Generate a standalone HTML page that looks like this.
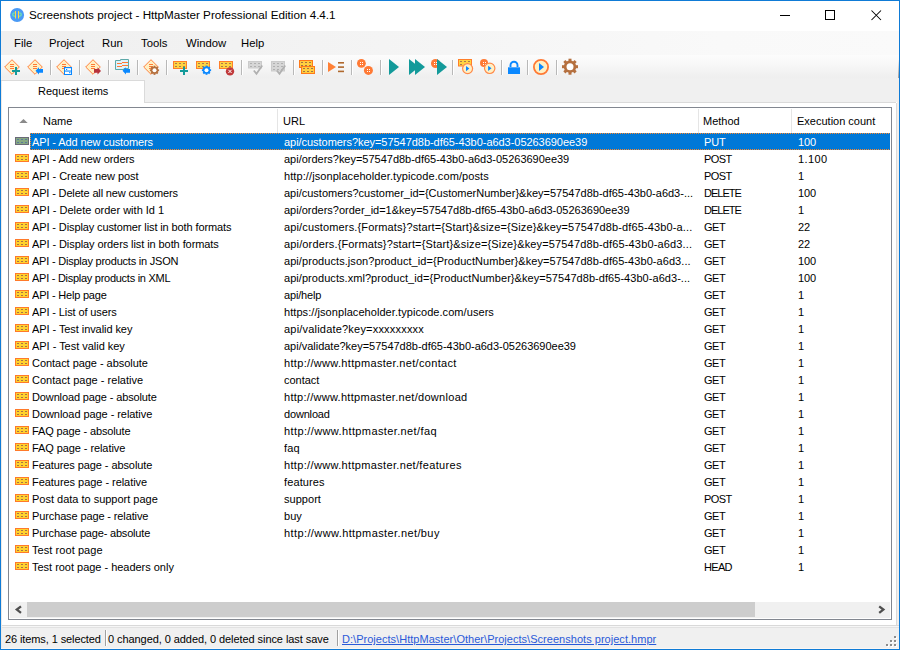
<!DOCTYPE html>
<html><head><meta charset="utf-8">
<style>
*{margin:0;padding:0;box-sizing:border-box}
html,body{width:900px;height:650px;overflow:hidden;background:#fff}
body{position:relative;font-family:"Liberation Sans",sans-serif;color:#000;font-size:11px}
.abs{position:absolute}
#frame{position:absolute;left:0;top:0;width:900px;height:650px;border:1px solid #0f7bd6;pointer-events:none;z-index:50}
#title{position:absolute;left:1px;top:1px;width:898px;height:30px;background:#fff}
#title .t{position:absolute;left:28px;top:6px;font-size:11.7px;line-height:16px;white-space:nowrap;color:#000}
#menu{position:absolute;left:1px;top:31px;width:898px;height:24px;background:linear-gradient(90deg,#efefef,#f3f3f3 35%,#f9f9f9 80%,#fafafa)}
#menu span{position:absolute;top:5px;font-size:11.3px;line-height:14px;white-space:nowrap}
#tool{position:absolute;left:1px;top:55px;width:898px;height:25px;background:linear-gradient(#fcfcfc,#f7f7f7 40%,#efefef 88%,#f0f0f0)}
#tool svg{position:absolute;top:4px;overflow:visible}
.sep{position:absolute;top:5px;width:1px;height:15px;background:#b8b8b8;box-shadow:1px 0 0 #fff}
#tabline{position:absolute;left:1px;top:80px;width:144px;height:1px;background:#dadada}
#tabbg{position:absolute;left:145px;top:80px;width:754px;height:22px;background:#f0f0f0}
#tabbot{position:absolute;left:144px;top:102px;width:752px;height:1px;background:#dadada}
#tab{position:absolute;left:1px;top:81px;width:144px;height:22px;background:#fff;border-right:1px solid #dadada}
#tab span{position:absolute;left:37px;top:3px;font-size:11px;line-height:14px;white-space:nowrap}
#panel{position:absolute;left:1px;top:103px;width:896px;height:522px;background:#fff;border-right:1px solid #dadada}
#rstrip{position:absolute;left:897px;top:81px;width:2px;height:568px;background:#f2efec}
#lstrip{position:absolute;left:1px;top:81px;width:1px;height:567px;background:#efe9e4}
#grid{position:absolute;left:8px;top:107px;width:884px;height:513px;border:1px solid #828790;background:#fff;overflow:hidden}
.hdr{position:absolute;top:6px;font-size:11px;line-height:14px;white-space:nowrap}
.hsep{position:absolute;top:1px;width:1px;height:24px;background:#e5e5e5}
.row{position:absolute;left:0;width:882px;height:17px;font-size:11px;line-height:17px;white-space:nowrap;letter-spacing:-0.1px}
.row span{position:absolute;top:1px;overflow:hidden}
.row .ri{position:absolute;left:6px;top:4px}
.c1{left:23px;width:244px}
.c2{left:275px;width:415px}
.c3{left:695px;width:90px}
.c4{left:789px;width:90px}
.sel .hl{position:absolute;left:21px;top:0;width:860px;height:17px;background:#0078d7;
  background-image:repeating-linear-gradient(90deg,#ff8828 0 1px,transparent 1px 2px),repeating-linear-gradient(90deg,#ff8828 0 1px,transparent 1px 2px),repeating-linear-gradient(0deg,#ff8828 0 1px,transparent 1px 2px);
  background-size:100% 1px,100% 1px,1px 100%;background-position:0 0,0 100%,0 0;background-repeat:no-repeat}
.sel span{color:#fff}
#hscroll{position:absolute;left:1px;top:494px;width:880px;height:16px;background:#f0f0f0}
#thumb{position:absolute;left:17px;top:0;width:728px;height:15px;background:#cdcdcd}
#status{position:absolute;left:1px;top:625px;width:898px;height:23px;background:linear-gradient(#d9d9d9 0 1px,#f6f6f6 1px 2px,#e2e2e2 2px 3px,#f0f0f0 3px)}
#sbot{position:absolute;left:1px;top:648px;width:898px;height:1px;background:#fbf7f4}
#status span{position:absolute;top:7px;font-size:11px;line-height:14px;white-space:nowrap}
.ssep{position:absolute;top:5px;width:1px;height:16px;background:#a0a0a0;box-shadow:1px 0 0 #fff}
</style></head><body>
<div id="title">
<svg class="abs" style="left:9px;top:7px" width="15" height="15" viewBox="0 0 15 15"><circle cx="7.1" cy="7" r="7" fill="#4a9af5"/><path d="M5.5 4.8 A2.8 1.8 0 0 0 5.5 8.4 M8.5 4.8 A2.8 1.8 0 0 1 8.5 8.4" stroke="#72e6a6" stroke-width="1.1" fill="none"/><path d="M5.5 3V10.5M8.5 3V10.5" stroke="#ffd84a" stroke-width="1"/></svg>
<span class="t">Screenshots project - HttpMaster Professional Edition 4.4.1</span>
<svg class="abs" style="left:779px;top:14px" width="10" height="1"><rect width="10" height="1" fill="#000"/></svg>
<svg class="abs" style="left:824px;top:9px" width="10" height="10"><rect x="0.5" y="0.5" width="9" height="9" fill="none" stroke="#000"/></svg>
<svg class="abs" style="left:870px;top:9px" width="11" height="11" viewBox="0 0 11 11"><path d="M0.5 0.5L10 10M10 0.5L0.5 10" stroke="#000" stroke-width="1.05"/></svg>
</div>
<div id="menu">
<span style="left:13px">File</span><span style="left:48px">Project</span><span style="left:101px">Run</span><span style="left:140px">Tools</span><span style="left:185px">Window</span><span style="left:240px">Help</span>
</div>
<div id="tool">
<svg style="left:3px" width="16" height="16" viewBox="0 0 16 16"><path d="M8 0.7L15.3 8L8 15.3L0.7 8Z" fill="#fff0c4" stroke="#ff7a35" stroke-width="0.95" stroke-linejoin="round"/><g fill="#ff7a35"><rect x="6" y="5" width="4" height="1"/><rect x="6" y="7" width="4" height="1"/><rect x="6" y="9" width="4" height="1"/></g><rect x="8.0" y="11.0" width="8" height="2" fill="#139a9a"/><rect x="11.0" y="8.0" width="2" height="8" fill="#139a9a"/></svg>
<svg style="left:26px" width="16" height="16" viewBox="0 0 16 16"><path d="M8 0.7L15.3 8L8 15.3L0.7 8Z" fill="#fff0c4" stroke="#ff7a35" stroke-width="0.95" stroke-linejoin="round"/><g fill="#ff7a35"><rect x="6" y="5" width="4" height="1"/><rect x="6" y="7" width="4" height="1"/><rect x="6" y="9" width="4" height="1"/></g><path d="M8.5 11.8L12 8.3V10H16V13.8H12V15.5Z" fill="#0a88ff"/></svg>
<div class="sep" style="left:49px"></div>
<svg style="left:55px" width="16" height="16" viewBox="0 0 16 16"><path d="M8 0.7L15.3 8L8 15.3L0.7 8Z" fill="#fff0c4" stroke="#ff7a35" stroke-width="0.95" stroke-linejoin="round"/><g fill="#ff7a35"><rect x="6" y="5" width="4" height="1"/><rect x="6" y="7" width="4" height="1"/><rect x="6" y="9" width="4" height="1"/></g><rect x="8" y="8" width="8" height="8" fill="#0a88ff"/><rect x="9" y="9.2" width="6" height="2.3" fill="#fff"/><rect x="9" y="12.6" width="6" height="2.4" fill="#fff"/><rect x="10" y="10" width="1.2" height="1" fill="#0a88ff"/><rect x="13" y="13.2" width="1.5" height="1" fill="#0a88ff"/></svg>
<div class="sep" style="left:78px"></div>
<svg style="left:84px" width="16" height="16" viewBox="0 0 16 16"><path d="M8 0.7L15.3 8L8 15.3L0.7 8Z" fill="#fff0c4" stroke="#ff7a35" stroke-width="0.95" stroke-linejoin="round"/><g fill="#ff7a35"><rect x="6" y="5" width="4" height="1"/><rect x="6" y="7" width="4" height="1"/><rect x="6" y="9" width="4" height="1"/></g><path d="M16 11.9L12.5 8.3V10H9V13.8H12.5V15.5Z" fill="#b8323a"/></svg>
<div class="sep" style="left:107px"></div>
<svg style="left:113px" width="16" height="16" viewBox="0 0 16 16"><path d="M1.5 1.5H6.5V0.5H14.5V9.5H10V10.5H1.5Z" fill="#dff2fb" stroke="#5ea9a9"/><g fill="#ff7a35"><rect x="3" y="4" width="5" height="1"/><rect x="8" y="3" width="6" height="1"/><rect x="3" y="7" width="5" height="1"/><rect x="8" y="6" width="6" height="1"/></g><path d="M8.5 11.8L12 8.3V10H16V13.8H12V15.5Z" fill="#0a88ff"/></svg>
<div class="sep" style="left:136px"></div>
<svg style="left:142px" width="16" height="16" viewBox="0 0 16 16"><path d="M8 0.7L15.3 8L8 15.3L0.7 8Z" fill="#fff0c4" stroke="#ff7a35" stroke-width="0.95" stroke-linejoin="round"/><g fill="#ff7a35"><rect x="6" y="5" width="4" height="1"/><rect x="6" y="7" width="4" height="1"/><rect x="6" y="9" width="4" height="1"/></g><circle cx="11.5" cy="11.3" r="3.5879999999999996" fill="#b5703f"/><rect x="10.534" y="6.700000000000001" width="1.9319999999999997" height="2.76" fill="#b5703f" transform="rotate(0.0 11.5 11.3)"/><rect x="10.534" y="6.700000000000001" width="1.9319999999999997" height="2.76" fill="#b5703f" transform="rotate(45.0 11.5 11.3)"/><rect x="10.534" y="6.700000000000001" width="1.9319999999999997" height="2.76" fill="#b5703f" transform="rotate(90.0 11.5 11.3)"/><rect x="10.534" y="6.700000000000001" width="1.9319999999999997" height="2.76" fill="#b5703f" transform="rotate(135.0 11.5 11.3)"/><rect x="10.534" y="6.700000000000001" width="1.9319999999999997" height="2.76" fill="#b5703f" transform="rotate(180.0 11.5 11.3)"/><rect x="10.534" y="6.700000000000001" width="1.9319999999999997" height="2.76" fill="#b5703f" transform="rotate(225.0 11.5 11.3)"/><rect x="10.534" y="6.700000000000001" width="1.9319999999999997" height="2.76" fill="#b5703f" transform="rotate(270.0 11.5 11.3)"/><rect x="10.534" y="6.700000000000001" width="1.9319999999999997" height="2.76" fill="#b5703f" transform="rotate(315.0 11.5 11.3)"/><circle cx="11.5" cy="11.3" r="2" fill="#fff"/></svg>
<div class="sep" style="left:165px"></div>
<svg style="left:172px" width="16" height="16" viewBox="0 0 16 16"><rect x="0.5" y="2.5" width="13" height="7" fill="#ffd341" stroke="#ff7f2a" stroke-width="1"/><rect x="2" y="4" width="2" height="1" fill="#a87850"/><rect x="6" y="4" width="2" height="1" fill="#a87850"/><rect x="10" y="4" width="2" height="1" fill="#a87850"/><rect x="2" y="7" width="2" height="1" fill="#a87850"/><rect x="6" y="7" width="2" height="1" fill="#a87850"/><rect x="10" y="7" width="2" height="1" fill="#a87850"/><rect x="7.0" y="11.0" width="8" height="2" fill="#139a9a"/><rect x="10.0" y="8.0" width="2" height="8" fill="#139a9a"/></svg>
<svg style="left:195px" width="16" height="16" viewBox="0 0 16 16"><rect x="0.5" y="2.5" width="13" height="7" fill="#ffd341" stroke="#ff7f2a" stroke-width="1"/><rect x="2" y="4" width="2" height="1" fill="#a87850"/><rect x="6" y="4" width="2" height="1" fill="#a87850"/><rect x="10" y="4" width="2" height="1" fill="#a87850"/><rect x="2" y="7" width="2" height="1" fill="#a87850"/><rect x="6" y="7" width="2" height="1" fill="#a87850"/><rect x="10" y="7" width="2" height="1" fill="#a87850"/><circle cx="10.5" cy="11.2" r="3.5879999999999996" fill="#0a88ff"/><rect x="9.534" y="6.6" width="1.9319999999999997" height="2.76" fill="#0a88ff" transform="rotate(0.0 10.5 11.2)"/><rect x="9.534" y="6.6" width="1.9319999999999997" height="2.76" fill="#0a88ff" transform="rotate(45.0 10.5 11.2)"/><rect x="9.534" y="6.6" width="1.9319999999999997" height="2.76" fill="#0a88ff" transform="rotate(90.0 10.5 11.2)"/><rect x="9.534" y="6.6" width="1.9319999999999997" height="2.76" fill="#0a88ff" transform="rotate(135.0 10.5 11.2)"/><rect x="9.534" y="6.6" width="1.9319999999999997" height="2.76" fill="#0a88ff" transform="rotate(180.0 10.5 11.2)"/><rect x="9.534" y="6.6" width="1.9319999999999997" height="2.76" fill="#0a88ff" transform="rotate(225.0 10.5 11.2)"/><rect x="9.534" y="6.6" width="1.9319999999999997" height="2.76" fill="#0a88ff" transform="rotate(270.0 10.5 11.2)"/><rect x="9.534" y="6.6" width="1.9319999999999997" height="2.76" fill="#0a88ff" transform="rotate(315.0 10.5 11.2)"/><circle cx="10.5" cy="11.2" r="2" fill="#fff"/></svg>
<svg style="left:218px" width="16" height="16" viewBox="0 0 16 16"><rect x="0.5" y="2.5" width="13" height="7" fill="#ffd341" stroke="#ff7f2a" stroke-width="1"/><rect x="2" y="4" width="2" height="1" fill="#a87850"/><rect x="6" y="4" width="2" height="1" fill="#a87850"/><rect x="10" y="4" width="2" height="1" fill="#a87850"/><rect x="2" y="7" width="2" height="1" fill="#a87850"/><rect x="6" y="7" width="2" height="1" fill="#a87850"/><rect x="10" y="7" width="2" height="1" fill="#a87850"/><circle cx="11" cy="12.4" r="4.2" fill="#c0393b"/><path d="M9.4 10.8L12.6 14M12.6 10.8L9.4 14" stroke="#fff" stroke-width="1"/></svg>
<div class="sep" style="left:240px"></div>
<svg style="left:247px" width="16" height="16" viewBox="0 0 16 16"><rect x="0.5" y="2.5" width="13" height="6.5" fill="#d6d6d6" stroke="#cbcbcb" stroke-width="1"/><rect x="2" y="4" width="2" height="1" fill="#b0b0b0"/><rect x="6" y="4" width="2" height="1" fill="#b0b0b0"/><rect x="10" y="4" width="2" height="1" fill="#b0b0b0"/><rect x="2" y="7" width="2" height="1" fill="#b0b0b0"/><rect x="6" y="7" width="2" height="1" fill="#b0b0b0"/><rect x="10" y="7" width="2" height="1" fill="#b0b0b0"/><path d="M5.8 11.5L8.5 14.8L14.2 6.5" stroke="#b0b0b0" stroke-width="1.8" fill="none"/></svg>
<svg style="left:270px" width="16" height="16" viewBox="0 0 16 16"><rect x="0.5" y="2.5" width="13" height="9.5" fill="#d6d6d6" stroke="#cbcbcb" stroke-width="1"/><rect x="2" y="4" width="2" height="1" fill="#b0b0b0"/><rect x="6" y="4" width="2" height="1" fill="#b0b0b0"/><rect x="10" y="4" width="2" height="1" fill="#b0b0b0"/><rect x="2" y="7" width="2" height="1" fill="#b0b0b0"/><rect x="6" y="7" width="2" height="1" fill="#b0b0b0"/><rect x="10" y="7" width="2" height="1" fill="#b0b0b0"/><rect x="2" y="10" width="2" height="1" fill="#b0b0b0"/><rect x="6" y="10" width="2" height="1" fill="#b0b0b0"/><rect x="10" y="10" width="2" height="1" fill="#b0b0b0"/><path d="M5.8 11.5L8.5 14.8L14.2 6.5" stroke="#b0b0b0" stroke-width="1.8" fill="none"/></svg>
<div class="sep" style="left:292px"></div>
<svg style="left:298px" width="16" height="16" viewBox="0 0 16 16"><rect x="0.525" y="1.525" width="12.95" height="6.95" fill="#ffd040" stroke="#ff7a1a" stroke-width="1.05"/><rect x="2" y="3" width="2" height="1" fill="#a0704a"/><rect x="6" y="3" width="2" height="1" fill="#a0704a"/><rect x="10" y="3" width="2" height="1" fill="#a0704a"/><rect x="2" y="6" width="2" height="1" fill="#a0704a"/><rect x="6" y="6" width="2" height="1" fill="#a0704a"/><rect x="10" y="6" width="2" height="1" fill="#a0704a"/><rect x="2.525" y="7.525" width="12.95" height="6.95" fill="#ffd040" stroke="#ff7a1a" stroke-width="1.05"/><rect x="4" y="9" width="2" height="1" fill="#a0704a"/><rect x="8" y="9" width="2" height="1" fill="#a0704a"/><rect x="12" y="9" width="2" height="1" fill="#a0704a"/><rect x="4" y="12" width="2" height="1" fill="#a0704a"/><rect x="8" y="12" width="2" height="1" fill="#a0704a"/><rect x="12" y="12" width="2" height="1" fill="#a0704a"/></svg>
<div class="sep" style="left:321px"></div>
<svg style="left:327px" width="16" height="16" viewBox="0 0 16 16"><path d="M0 3L8 8L0 13Z" fill="#ff8035"/><g fill="#b0692e"><rect x="10" y="3" width="6" height="1.6"/><rect x="10" y="7.3" width="6" height="1.6"/><rect x="10" y="11.6" width="6" height="1.6"/></g></svg>
<div class="sep" style="left:350px"></div>
<svg style="left:356px" width="16" height="16" viewBox="0 0 16 16"><circle cx="4.4" cy="4.3" r="4.4" fill="#ff7a35"/><g fill="#fff"><rect x="3" y="3" width="1" height="1"/><rect x="5" y="3" width="1" height="1"/><rect x="3" y="5" width="1" height="1"/><rect x="5" y="5" width="1" height="1"/></g><circle cx="11.4" cy="11.4" r="4.5" fill="#ff7a35"/><g fill="#fff"><rect x="10" y="10" width="1" height="1"/><rect x="12" y="10" width="1" height="1"/><rect x="10" y="12" width="1" height="1"/><rect x="12" y="12" width="1" height="1"/></g></svg>
<div class="sep" style="left:379px"></div>
<svg style="left:387px" width="16" height="16" viewBox="0 0 16 16"><path d="M1 0L11 8L1 16Z" fill="#139a9a"/></svg>
<svg style="left:408px" width="16" height="16" viewBox="0 0 16 16"><path d="M0 0L10 8L0 16Z" fill="#139a9a"/><path d="M6 0L16 8L6 16Z" fill="#139a9a"/></svg>
<svg style="left:430px" width="16" height="16" viewBox="0 0 16 16"><circle cx="4.5" cy="4.5" r="4.5" fill="#ff7a35"/><g fill="#fff"><rect x="3" y="3" width="1" height="1"/><rect x="5" y="3" width="1" height="1"/><rect x="3" y="5" width="1" height="1"/><rect x="5" y="5" width="1" height="1"/></g><path d="M6 0L16 8L6 16Z" fill="#139a9a"/></svg>
<div class="sep" style="left:451px"></div>
<svg style="left:457px" width="16" height="16" viewBox="0 0 16 16"><rect x="0.5" y="0.5" width="13" height="6.5" fill="#ffd341" stroke="#ff7f2a" stroke-width="1"/><rect x="2" y="2" width="2" height="1" fill="#a87850"/><rect x="6" y="2" width="2" height="1" fill="#a87850"/><rect x="10" y="2" width="2" height="1" fill="#a87850"/><rect x="2" y="5" width="2" height="1" fill="#a87850"/><rect x="6" y="5" width="2" height="1" fill="#a87850"/><rect x="10" y="5" width="2" height="1" fill="#a87850"/><circle cx="9.6" cy="9.6" r="5" fill="#fff0c4" stroke="#ff8a4a" stroke-width="1.2"/><path d="M8.0 7.0L11.4 9.6L8.0 12.2Z" fill="#0a88ff"/></svg>
<svg style="left:479px" width="16" height="16" viewBox="0 0 16 16"><circle cx="4" cy="4" r="4" fill="#ff7a35"/><g fill="#fff"><rect x="3" y="3" width="1" height="1"/><rect x="5" y="3" width="1" height="1"/><rect x="3" y="5" width="1" height="1"/><rect x="5" y="5" width="1" height="1"/></g><circle cx="9.7" cy="9.3" r="5.2" fill="#fff0c4" stroke="#ff8a4a" stroke-width="1.2"/><path d="M8.1 6.700000000000001L11.5 9.3L8.1 11.9Z" fill="#0a88ff"/></svg>
<div class="sep" style="left:500px"></div>
<svg style="left:507px" width="12" height="16" viewBox="0 0 12 16"><path d="M2.5 8V6.2A3.5 3.5 0 0 1 9.5 6.2V8" stroke="#0a88ff" stroke-width="1.9" fill="none"/><rect x="0" y="8.3" width="12" height="6.7" fill="#0a88ff"/></svg>
<div class="sep" style="left:526px"></div>
<svg style="left:532px" width="16" height="16" viewBox="0 0 16 16"><circle cx="8" cy="8" r="7.1" fill="#fff0c4" stroke="#ff7a35" stroke-width="1.8"/><path d="M6 4L11 8L6 12Z" fill="#0a88ff"/></svg>
<div class="sep" style="left:555px"></div>
<svg style="left:561px" width="16" height="16" viewBox="0 0 16 16"><circle cx="8" cy="7.7" r="6.24" fill="#b5703f"/><rect x="6.5" y="-0.2999999999999998" width="3.0" height="4.8" fill="#b5703f" transform="rotate(0.0 8 7.7)"/><rect x="6.5" y="-0.2999999999999998" width="3.0" height="4.8" fill="#b5703f" transform="rotate(45.0 8 7.7)"/><rect x="6.5" y="-0.2999999999999998" width="3.0" height="4.8" fill="#b5703f" transform="rotate(90.0 8 7.7)"/><rect x="6.5" y="-0.2999999999999998" width="3.0" height="4.8" fill="#b5703f" transform="rotate(135.0 8 7.7)"/><rect x="6.5" y="-0.2999999999999998" width="3.0" height="4.8" fill="#b5703f" transform="rotate(180.0 8 7.7)"/><rect x="6.5" y="-0.2999999999999998" width="3.0" height="4.8" fill="#b5703f" transform="rotate(225.0 8 7.7)"/><rect x="6.5" y="-0.2999999999999998" width="3.0" height="4.8" fill="#b5703f" transform="rotate(270.0 8 7.7)"/><rect x="6.5" y="-0.2999999999999998" width="3.0" height="4.8" fill="#b5703f" transform="rotate(315.0 8 7.7)"/><circle cx="8" cy="7.7" r="3.5" fill="#fff"/></svg>
</div>
<div id="tabline"></div>
<div id="tabbg"></div>
<div id="panel"></div>
<div id="tabbot"></div>
<div id="rstrip"></div>
<div id="tab"><span>Request items</span></div>
<div id="grid">
<svg class="abs" style="left:10px;top:11px" width="9" height="4" viewBox="0 0 9 4"><path d="M0.3 4L4.5 0.1L8.7 4Z" fill="#8a8a8a"/></svg>
<span class="hdr" style="left:34px">Name</span>
<div class="hsep" style="left:268px"></div>
<span class="hdr" style="left:274px">URL</span>
<div class="hsep" style="left:689px"></div>
<span class="hdr" style="left:694px">Method</span>
<div class="hsep" style="left:782px"></div>
<span class="hdr" style="left:788px">Execution count</span>
<div class="row sel" style="top:25px"><svg class="ri" width="14" height="8" viewBox="0 0 14 8"><rect x="0.5" y="0.5" width="13" height="7" fill="#86a882" stroke="#6a6a78"/><g fill="#5a7a9a"><rect x="2" y="2" width="2" height="1"/><rect x="6" y="2" width="2" height="1"/><rect x="10" y="2" width="2" height="1"/><rect x="2" y="5" width="2" height="1"/><rect x="6" y="5" width="2" height="1"/><rect x="10" y="5" width="2" height="1"/></g></svg><div class="hl"></div><span class="c1" style="letter-spacing:-0.109px">API - Add new customers</span><span class="c2" style="letter-spacing:-0.042px">api/customers?key=57547d8b-df65-43b0-a6d3-05263690ee39</span><span class="c3" style="letter-spacing:-0.1px">PUT</span><span class="c4" style="letter-spacing:-0.1px">100</span></div>
<div class="row" style="top:42px"><svg class="ri" width="14" height="8" viewBox="0 0 14 8"><rect x="0.5" y="0.5" width="13" height="7" fill="#ffd22e" stroke="#ff7a2a"/><g fill="#a8704a"><rect x="2" y="2" width="2" height="1"/><rect x="6" y="2" width="2" height="1"/><rect x="10" y="2" width="2" height="1"/><rect x="2" y="5" width="2" height="1"/><rect x="6" y="5" width="2" height="1"/><rect x="10" y="5" width="2" height="1"/></g></svg><div class="hl"></div><span class="c1" style="letter-spacing:-0.074px">API - Add new orders</span><span class="c2" style="letter-spacing:-0.014px">api/orders?key=57547d8b-df65-43b0-a6d3-05263690ee39</span><span class="c3" style="letter-spacing:-0.6px">POST</span><span class="c4" style="letter-spacing:0.4px">1.100</span></div>
<div class="row" style="top:59px"><svg class="ri" width="14" height="8" viewBox="0 0 14 8"><rect x="0.5" y="0.5" width="13" height="7" fill="#ffd22e" stroke="#ff7a2a"/><g fill="#a8704a"><rect x="2" y="2" width="2" height="1"/><rect x="6" y="2" width="2" height="1"/><rect x="10" y="2" width="2" height="1"/><rect x="2" y="5" width="2" height="1"/><rect x="6" y="5" width="2" height="1"/><rect x="10" y="5" width="2" height="1"/></g></svg><div class="hl"></div><span class="c1" style="letter-spacing:-0.050px">API - Create new post</span><span class="c2" style="letter-spacing:0.088px">http://jsonplaceholder.typicode.com/posts</span><span class="c3" style="letter-spacing:-0.6px">POST</span><span class="c4" style="letter-spacing:-0.1px">1</span></div>
<div class="row" style="top:76px"><svg class="ri" width="14" height="8" viewBox="0 0 14 8"><rect x="0.5" y="0.5" width="13" height="7" fill="#ffd22e" stroke="#ff7a2a"/><g fill="#a8704a"><rect x="2" y="2" width="2" height="1"/><rect x="6" y="2" width="2" height="1"/><rect x="10" y="2" width="2" height="1"/><rect x="2" y="5" width="2" height="1"/><rect x="6" y="5" width="2" height="1"/><rect x="10" y="5" width="2" height="1"/></g></svg><div class="hl"></div><span class="c1" style="letter-spacing:-0.152px">API - Delete all new customers</span><span class="c2" style="letter-spacing:0.000px">api/customers?customer_id={CustomerNumber}&amp;key=57547d8b-df65-43b0-a6d3-...</span><span class="c3" style="letter-spacing:-1.0px">DELETE</span><span class="c4" style="letter-spacing:-0.1px">100</span></div>
<div class="row" style="top:93px"><svg class="ri" width="14" height="8" viewBox="0 0 14 8"><rect x="0.5" y="0.5" width="13" height="7" fill="#ffd22e" stroke="#ff7a2a"/><g fill="#a8704a"><rect x="2" y="2" width="2" height="1"/><rect x="6" y="2" width="2" height="1"/><rect x="10" y="2" width="2" height="1"/><rect x="2" y="5" width="2" height="1"/><rect x="6" y="5" width="2" height="1"/><rect x="10" y="5" width="2" height="1"/></g></svg><div class="hl"></div><span class="c1" style="letter-spacing:0.004px">API - Delete order with Id 1</span><span class="c2" style="letter-spacing:-0.010px">api/orders?order_id=1&amp;key=57547d8b-df65-43b0-a6d3-05263690ee39</span><span class="c3" style="letter-spacing:-1.0px">DELETE</span><span class="c4" style="letter-spacing:-0.1px">1</span></div>
<div class="row" style="top:110px"><svg class="ri" width="14" height="8" viewBox="0 0 14 8"><rect x="0.5" y="0.5" width="13" height="7" fill="#ffd22e" stroke="#ff7a2a"/><g fill="#a8704a"><rect x="2" y="2" width="2" height="1"/><rect x="6" y="2" width="2" height="1"/><rect x="10" y="2" width="2" height="1"/><rect x="2" y="5" width="2" height="1"/><rect x="6" y="5" width="2" height="1"/><rect x="10" y="5" width="2" height="1"/></g></svg><div class="hl"></div><span class="c1" style="letter-spacing:-0.112px">API - Display customer list in both formats</span><span class="c2" style="letter-spacing:0.138px">api/customers.{Formats}?start={Start}&amp;size={Size}&amp;key=57547d8b-df65-43b0-a...</span><span class="c3" style="letter-spacing:-0.5px">GET</span><span class="c4" style="letter-spacing:-0.1px">22</span></div>
<div class="row" style="top:127px"><svg class="ri" width="14" height="8" viewBox="0 0 14 8"><rect x="0.5" y="0.5" width="13" height="7" fill="#ffd22e" stroke="#ff7a2a"/><g fill="#a8704a"><rect x="2" y="2" width="2" height="1"/><rect x="6" y="2" width="2" height="1"/><rect x="10" y="2" width="2" height="1"/><rect x="2" y="5" width="2" height="1"/><rect x="6" y="5" width="2" height="1"/><rect x="10" y="5" width="2" height="1"/></g></svg><div class="hl"></div><span class="c1" style="letter-spacing:-0.083px">API - Display orders list in both formats</span><span class="c2" style="letter-spacing:0.151px">api/orders.{Formats}?start={Start}&amp;size={Size}&amp;key=57547d8b-df65-43b0-a6d3...</span><span class="c3" style="letter-spacing:-0.5px">GET</span><span class="c4" style="letter-spacing:-0.1px">22</span></div>
<div class="row" style="top:144px"><svg class="ri" width="14" height="8" viewBox="0 0 14 8"><rect x="0.5" y="0.5" width="13" height="7" fill="#ffd22e" stroke="#ff7a2a"/><g fill="#a8704a"><rect x="2" y="2" width="2" height="1"/><rect x="6" y="2" width="2" height="1"/><rect x="10" y="2" width="2" height="1"/><rect x="2" y="5" width="2" height="1"/><rect x="6" y="5" width="2" height="1"/><rect x="10" y="5" width="2" height="1"/></g></svg><div class="hl"></div><span class="c1" style="letter-spacing:-0.221px">API - Display products in JSON</span><span class="c2" style="letter-spacing:0.065px">api/products.json?product_id={ProductNumber}&amp;key=57547d8b-df65-43b0-a6d3...</span><span class="c3" style="letter-spacing:-0.5px">GET</span><span class="c4" style="letter-spacing:-0.1px">100</span></div>
<div class="row" style="top:161px"><svg class="ri" width="14" height="8" viewBox="0 0 14 8"><rect x="0.5" y="0.5" width="13" height="7" fill="#ffd22e" stroke="#ff7a2a"/><g fill="#a8704a"><rect x="2" y="2" width="2" height="1"/><rect x="6" y="2" width="2" height="1"/><rect x="10" y="2" width="2" height="1"/><rect x="2" y="5" width="2" height="1"/><rect x="6" y="5" width="2" height="1"/><rect x="10" y="5" width="2" height="1"/></g></svg><div class="hl"></div><span class="c1" style="letter-spacing:-0.271px">API - Display products in XML</span><span class="c2" style="letter-spacing:0.051px">api/products.xml?product_id={ProductNumber}&amp;key=57547d8b-df65-43b0-a6d3-...</span><span class="c3" style="letter-spacing:-0.5px">GET</span><span class="c4" style="letter-spacing:-0.1px">100</span></div>
<div class="row" style="top:178px"><svg class="ri" width="14" height="8" viewBox="0 0 14 8"><rect x="0.5" y="0.5" width="13" height="7" fill="#ffd22e" stroke="#ff7a2a"/><g fill="#a8704a"><rect x="2" y="2" width="2" height="1"/><rect x="6" y="2" width="2" height="1"/><rect x="10" y="2" width="2" height="1"/><rect x="2" y="5" width="2" height="1"/><rect x="6" y="5" width="2" height="1"/><rect x="10" y="5" width="2" height="1"/></g></svg><div class="hl"></div><span class="c1" style="letter-spacing:-0.207px">API - Help page</span><span class="c2" style="letter-spacing:-0.171px">api/help</span><span class="c3" style="letter-spacing:-0.5px">GET</span><span class="c4" style="letter-spacing:-0.1px">1</span></div>
<div class="row" style="top:195px"><svg class="ri" width="14" height="8" viewBox="0 0 14 8"><rect x="0.5" y="0.5" width="13" height="7" fill="#ffd22e" stroke="#ff7a2a"/><g fill="#a8704a"><rect x="2" y="2" width="2" height="1"/><rect x="6" y="2" width="2" height="1"/><rect x="10" y="2" width="2" height="1"/><rect x="2" y="5" width="2" height="1"/><rect x="6" y="5" width="2" height="1"/><rect x="10" y="5" width="2" height="1"/></g></svg><div class="hl"></div><span class="c1" style="letter-spacing:-0.117px">API - List of users</span><span class="c2" style="letter-spacing:0.063px">https://jsonplaceholder.typicode.com/users</span><span class="c3" style="letter-spacing:-0.5px">GET</span><span class="c4" style="letter-spacing:-0.1px">1</span></div>
<div class="row" style="top:212px"><svg class="ri" width="14" height="8" viewBox="0 0 14 8"><rect x="0.5" y="0.5" width="13" height="7" fill="#ffd22e" stroke="#ff7a2a"/><g fill="#a8704a"><rect x="2" y="2" width="2" height="1"/><rect x="6" y="2" width="2" height="1"/><rect x="10" y="2" width="2" height="1"/><rect x="2" y="5" width="2" height="1"/><rect x="6" y="5" width="2" height="1"/><rect x="10" y="5" width="2" height="1"/></g></svg><div class="hl"></div><span class="c1" style="letter-spacing:-0.071px">API - Test invalid key</span><span class="c2" style="letter-spacing:0.200px">api/validate?key=xxxxxxxxx</span><span class="c3" style="letter-spacing:-0.5px">GET</span><span class="c4" style="letter-spacing:-0.1px">1</span></div>
<div class="row" style="top:229px"><svg class="ri" width="14" height="8" viewBox="0 0 14 8"><rect x="0.5" y="0.5" width="13" height="7" fill="#ffd22e" stroke="#ff7a2a"/><g fill="#a8704a"><rect x="2" y="2" width="2" height="1"/><rect x="6" y="2" width="2" height="1"/><rect x="10" y="2" width="2" height="1"/><rect x="2" y="5" width="2" height="1"/><rect x="6" y="5" width="2" height="1"/><rect x="10" y="5" width="2" height="1"/></g></svg><div class="hl"></div><span class="c1" style="letter-spacing:-0.026px">API - Test valid key</span><span class="c2" style="letter-spacing:-0.013px">api/validate?key=57547d8b-df65-43b0-a6d3-05263690ee39</span><span class="c3" style="letter-spacing:-0.5px">GET</span><span class="c4" style="letter-spacing:-0.1px">1</span></div>
<div class="row" style="top:246px"><svg class="ri" width="14" height="8" viewBox="0 0 14 8"><rect x="0.5" y="0.5" width="13" height="7" fill="#ffd22e" stroke="#ff7a2a"/><g fill="#a8704a"><rect x="2" y="2" width="2" height="1"/><rect x="6" y="2" width="2" height="1"/><rect x="10" y="2" width="2" height="1"/><rect x="2" y="5" width="2" height="1"/><rect x="6" y="5" width="2" height="1"/><rect x="10" y="5" width="2" height="1"/></g></svg><div class="hl"></div><span class="c1" style="letter-spacing:-0.041px">Contact page - absolute</span><span class="c2" style="letter-spacing:0.322px">http://www.httpmaster.net/contact</span><span class="c3" style="letter-spacing:-0.5px">GET</span><span class="c4" style="letter-spacing:-0.1px">1</span></div>
<div class="row" style="top:263px"><svg class="ri" width="14" height="8" viewBox="0 0 14 8"><rect x="0.5" y="0.5" width="13" height="7" fill="#ffd22e" stroke="#ff7a2a"/><g fill="#a8704a"><rect x="2" y="2" width="2" height="1"/><rect x="6" y="2" width="2" height="1"/><rect x="10" y="2" width="2" height="1"/><rect x="2" y="5" width="2" height="1"/><rect x="6" y="5" width="2" height="1"/><rect x="10" y="5" width="2" height="1"/></g></svg><div class="hl"></div><span class="c1" style="letter-spacing:0.023px">Contact page - relative</span><span class="c2" style="letter-spacing:-0.017px">contact</span><span class="c3" style="letter-spacing:-0.5px">GET</span><span class="c4" style="letter-spacing:-0.1px">1</span></div>
<div class="row" style="top:280px"><svg class="ri" width="14" height="8" viewBox="0 0 14 8"><rect x="0.5" y="0.5" width="13" height="7" fill="#ffd22e" stroke="#ff7a2a"/><g fill="#a8704a"><rect x="2" y="2" width="2" height="1"/><rect x="6" y="2" width="2" height="1"/><rect x="10" y="2" width="2" height="1"/><rect x="2" y="5" width="2" height="1"/><rect x="6" y="5" width="2" height="1"/><rect x="10" y="5" width="2" height="1"/></g></svg><div class="hl"></div><span class="c1" style="letter-spacing:-0.126px">Download page - absolute</span><span class="c2" style="letter-spacing:0.288px">http://www.httpmaster.net/download</span><span class="c3" style="letter-spacing:-0.5px">GET</span><span class="c4" style="letter-spacing:-0.1px">1</span></div>
<div class="row" style="top:297px"><svg class="ri" width="14" height="8" viewBox="0 0 14 8"><rect x="0.5" y="0.5" width="13" height="7" fill="#ffd22e" stroke="#ff7a2a"/><g fill="#a8704a"><rect x="2" y="2" width="2" height="1"/><rect x="6" y="2" width="2" height="1"/><rect x="10" y="2" width="2" height="1"/><rect x="2" y="5" width="2" height="1"/><rect x="6" y="5" width="2" height="1"/><rect x="10" y="5" width="2" height="1"/></g></svg><div class="hl"></div><span class="c1" style="letter-spacing:-0.061px">Download page - relative</span><span class="c2" style="letter-spacing:-0.171px">download</span><span class="c3" style="letter-spacing:-0.5px">GET</span><span class="c4" style="letter-spacing:-0.1px">1</span></div>
<div class="row" style="top:314px"><svg class="ri" width="14" height="8" viewBox="0 0 14 8"><rect x="0.5" y="0.5" width="13" height="7" fill="#ffd22e" stroke="#ff7a2a"/><g fill="#a8704a"><rect x="2" y="2" width="2" height="1"/><rect x="6" y="2" width="2" height="1"/><rect x="10" y="2" width="2" height="1"/><rect x="2" y="5" width="2" height="1"/><rect x="6" y="5" width="2" height="1"/><rect x="10" y="5" width="2" height="1"/></g></svg><div class="hl"></div><span class="c1" style="letter-spacing:-0.128px">FAQ page - absolute</span><span class="c2" style="letter-spacing:0.382px">http://www.httpmaster.net/faq</span><span class="c3" style="letter-spacing:-0.5px">GET</span><span class="c4" style="letter-spacing:-0.1px">1</span></div>
<div class="row" style="top:331px"><svg class="ri" width="14" height="8" viewBox="0 0 14 8"><rect x="0.5" y="0.5" width="13" height="7" fill="#ffd22e" stroke="#ff7a2a"/><g fill="#a8704a"><rect x="2" y="2" width="2" height="1"/><rect x="6" y="2" width="2" height="1"/><rect x="10" y="2" width="2" height="1"/><rect x="2" y="5" width="2" height="1"/><rect x="6" y="5" width="2" height="1"/><rect x="10" y="5" width="2" height="1"/></g></svg><div class="hl"></div><span class="c1" style="letter-spacing:-0.083px">FAQ page - relative</span><span class="c2" style="letter-spacing:0.150px">faq</span><span class="c3" style="letter-spacing:-0.5px">GET</span><span class="c4" style="letter-spacing:-0.1px">1</span></div>
<div class="row" style="top:348px"><svg class="ri" width="14" height="8" viewBox="0 0 14 8"><rect x="0.5" y="0.5" width="13" height="7" fill="#ffd22e" stroke="#ff7a2a"/><g fill="#a8704a"><rect x="2" y="2" width="2" height="1"/><rect x="6" y="2" width="2" height="1"/><rect x="10" y="2" width="2" height="1"/><rect x="2" y="5" width="2" height="1"/><rect x="6" y="5" width="2" height="1"/><rect x="10" y="5" width="2" height="1"/></g></svg><div class="hl"></div><span class="c1" style="letter-spacing:-0.083px">Features page - absolute</span><span class="c2" style="letter-spacing:0.339px">http://www.httpmaster.net/features</span><span class="c3" style="letter-spacing:-0.5px">GET</span><span class="c4" style="letter-spacing:-0.1px">1</span></div>
<div class="row" style="top:365px"><svg class="ri" width="14" height="8" viewBox="0 0 14 8"><rect x="0.5" y="0.5" width="13" height="7" fill="#ffd22e" stroke="#ff7a2a"/><g fill="#a8704a"><rect x="2" y="2" width="2" height="1"/><rect x="6" y="2" width="2" height="1"/><rect x="10" y="2" width="2" height="1"/><rect x="2" y="5" width="2" height="1"/><rect x="6" y="5" width="2" height="1"/><rect x="10" y="5" width="2" height="1"/></g></svg><div class="hl"></div><span class="c1" style="letter-spacing:-0.043px">Features page - relative</span><span class="c2" style="letter-spacing:0.114px">features</span><span class="c3" style="letter-spacing:-0.5px">GET</span><span class="c4" style="letter-spacing:-0.1px">1</span></div>
<div class="row" style="top:382px"><svg class="ri" width="14" height="8" viewBox="0 0 14 8"><rect x="0.5" y="0.5" width="13" height="7" fill="#ffd22e" stroke="#ff7a2a"/><g fill="#a8704a"><rect x="2" y="2" width="2" height="1"/><rect x="6" y="2" width="2" height="1"/><rect x="10" y="2" width="2" height="1"/><rect x="2" y="5" width="2" height="1"/><rect x="6" y="5" width="2" height="1"/><rect x="10" y="5" width="2" height="1"/></g></svg><div class="hl"></div><span class="c1" style="letter-spacing:-0.008px">Post data to support page</span><span class="c2" style="letter-spacing:0.033px">support</span><span class="c3" style="letter-spacing:-0.6px">POST</span><span class="c4" style="letter-spacing:-0.1px">1</span></div>
<div class="row" style="top:399px"><svg class="ri" width="14" height="8" viewBox="0 0 14 8"><rect x="0.5" y="0.5" width="13" height="7" fill="#ffd22e" stroke="#ff7a2a"/><g fill="#a8704a"><rect x="2" y="2" width="2" height="1"/><rect x="6" y="2" width="2" height="1"/><rect x="10" y="2" width="2" height="1"/><rect x="2" y="5" width="2" height="1"/><rect x="6" y="5" width="2" height="1"/><rect x="10" y="5" width="2" height="1"/></g></svg><div class="hl"></div><span class="c1" style="letter-spacing:-0.122px">Purchase page - relative</span><span class="c2" style="letter-spacing:0.050px">buy</span><span class="c3" style="letter-spacing:-0.5px">GET</span><span class="c4" style="letter-spacing:-0.1px">1</span></div>
<div class="row" style="top:416px"><svg class="ri" width="14" height="8" viewBox="0 0 14 8"><rect x="0.5" y="0.5" width="13" height="7" fill="#ffd22e" stroke="#ff7a2a"/><g fill="#a8704a"><rect x="2" y="2" width="2" height="1"/><rect x="6" y="2" width="2" height="1"/><rect x="10" y="2" width="2" height="1"/><rect x="2" y="5" width="2" height="1"/><rect x="6" y="5" width="2" height="1"/><rect x="10" y="5" width="2" height="1"/></g></svg><div class="hl"></div><span class="c1" style="letter-spacing:-0.182px">Purchase page- absolute</span><span class="c2" style="letter-spacing:0.396px">http://www.httpmaster.net/buy</span><span class="c3" style="letter-spacing:-0.5px">GET</span><span class="c4" style="letter-spacing:-0.1px">1</span></div>
<div class="row" style="top:433px"><svg class="ri" width="14" height="8" viewBox="0 0 14 8"><rect x="0.5" y="0.5" width="13" height="7" fill="#ffd22e" stroke="#ff7a2a"/><g fill="#a8704a"><rect x="2" y="2" width="2" height="1"/><rect x="6" y="2" width="2" height="1"/><rect x="10" y="2" width="2" height="1"/><rect x="2" y="5" width="2" height="1"/><rect x="6" y="5" width="2" height="1"/><rect x="10" y="5" width="2" height="1"/></g></svg><div class="hl"></div><span class="c1" style="letter-spacing:0.069px">Test root page</span><span class="c2" style="letter-spacing:-0.100px"></span><span class="c3" style="letter-spacing:-0.5px">GET</span><span class="c4" style="letter-spacing:-0.1px">1</span></div>
<div class="row" style="top:450px"><svg class="ri" width="14" height="8" viewBox="0 0 14 8"><rect x="0.5" y="0.5" width="13" height="7" fill="#ffd22e" stroke="#ff7a2a"/><g fill="#a8704a"><rect x="2" y="2" width="2" height="1"/><rect x="6" y="2" width="2" height="1"/><rect x="10" y="2" width="2" height="1"/><rect x="2" y="5" width="2" height="1"/><rect x="6" y="5" width="2" height="1"/><rect x="10" y="5" width="2" height="1"/></g></svg><div class="hl"></div><span class="c1" style="letter-spacing:-0.021px">Test root page - headers only</span><span class="c2" style="letter-spacing:-0.100px"></span><span class="c3" style="letter-spacing:-0.7px">HEAD</span><span class="c4" style="letter-spacing:-0.1px">1</span></div>
<div id="hscroll"><div id="thumb"></div>
<svg class="abs" style="left:0;top:0" width="16" height="16" viewBox="0 0 16 16"><path d="M11 4.3L6.8 7.6L11 10.9" stroke="#4f4f4f" stroke-width="2.3" fill="none"/></svg>
<svg class="abs" style="left:864px;top:0" width="16" height="16" viewBox="0 0 16 16"><path d="M5.2 4.3L9.4 7.6L5.2 10.9" stroke="#4f4f4f" stroke-width="2.3" fill="none"/></svg>
</div>
</div>
<div id="status">
<span style="left:4px;letter-spacing:-0.1px">26 items, 1 selected</span>
<div class="ssep" style="left:104px"></div>
<span style="left:107px;letter-spacing:-0.07px">0 changed, 0 added, 0 deleted since last save</span>
<div class="ssep" style="left:336px"></div>
<span style="left:341px;color:#2a5ad8;text-decoration:underline;letter-spacing:0.03px">D:\Projects\HttpMaster\Other\Projects\Screenshots project.hmpr</span>
<svg class="abs" style="left:884px;top:10px" width="13" height="13" viewBox="0 0 13 13"><g fill="#fff"><rect x="10" y="2" width="2" height="2"/><rect x="6" y="6" width="2" height="2"/><rect x="10" y="6" width="2" height="2"/><rect x="2" y="10" width="2" height="2"/><rect x="6" y="10" width="2" height="2"/><rect x="10" y="10" width="2" height="2"/></g><g fill="#8c8c8c"><rect x="9" y="1" width="2" height="2"/><rect x="5" y="5" width="2" height="2"/><rect x="9" y="5" width="2" height="2"/><rect x="1" y="9" width="2" height="2"/><rect x="5" y="9" width="2" height="2"/><rect x="9" y="9" width="2" height="2"/></g></svg>
</div>
<div id="sbot"></div>
<div id="lstrip"></div>
<div class="abs" style="left:898px;top:60px;width:1px;height:18px;background:linear-gradient(#f6f6f6,#9c9c9c);z-index:40"></div>
<div id="frame"></div>
</body></html>
